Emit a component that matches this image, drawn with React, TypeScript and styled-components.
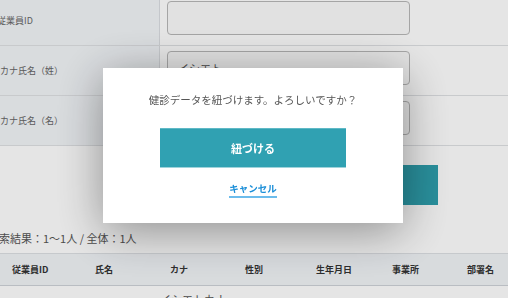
import React from 'react';
import styled, { createGlobalStyle } from 'styled-components';

const GlobalStyle = createGlobalStyle`
  body {
    margin: 0;
    overflow: hidden;
    background: #ffffff;
    font-family: 'Noto Sans CJK JP', 'Noto Sans', sans-serif;
    color: #555;
  }
`;

const formRows = [
  { label: '従業員ID', value: '', indent: 9 },
  { label: 'カナ氏名（姓）', value: 'イシエト', indent: 12 },
  { label: 'カナ氏名（名）', value: '', indent: 12 },
];

const columns = [
  { title: '従業員ID', width: 83 },
  { title: '氏名', width: 75 },
  { title: 'カナ', width: 75 },
  { title: '性別', width: 71 },
  { title: '生年月日', width: 76 },
  { title: '事業所', width: 75 },
  { title: '部署名', width: 77 },
];

const App = () => {
  return (
    <>
      <GlobalStyle />
      <Page>
        <FormTable>
          {formRows.map((row) => (
            <FormRow key={row.label}>
              <Label $indent={row.indent}>{row.label}</Label>
              <Field>
                <Input readOnly value={row.value} />
              </Field>
            </FormRow>
          ))}
        </FormTable>

        <SearchArea>
          <SearchButton>検索する</SearchButton>
        </SearchArea>

        <ResultCount>検索結果：1～1人 / 全体：1人</ResultCount>

        <Table>
          <HeaderRow>
            {columns.map((col) => (
              <HeaderCell key={col.title}>{col.title}</HeaderCell>
            ))}
          </HeaderRow>
          <DataRow>
            <DataCell />
            <DataCell />
            <DataCell>イシエトカナ</DataCell>
            <DataCell />
            <DataCell />
            <DataCell />
            <DataCell />
          </DataRow>
        </Table>
      </Page>

      <Overlay>
        <Modal>
          <Message>健診データを紐づけます。よろしいですか？</Message>
          <ConfirmButton>紐づける</ConfirmButton>
          <CancelLink>キャンセル</CancelLink>
        </Modal>
      </Overlay>
    </>
  );
};

export default App;

const Page = styled.div`
  width: 532px;
  margin-left: -12px;
`;

const FormTable = styled.div`
  margin-top: -4px;
`;

const FormRow = styled.div`
  display: grid;
  grid-template-columns: 172px 1fr;
  height: 50px;
  box-sizing: border-box;
  border-bottom: 1px solid #dfe1e4;
`;

const Label = styled.div<{ $indent: number }>`
  display: flex;
  align-items: center;
  padding-left: ${(p) => p.$indent}px;
  background: #f2f5f8;
  border-right: 1px solid #dbdee2;
  font-size: 9px;
  color: #666;
  white-space: nowrap;
`;

const Field = styled.div`
  padding: 5px 0 0 7px;
`;

const Input = styled.input`
  display: block;
  box-sizing: border-box;
  width: 243px;
  height: 34px;
  padding: 0 10px;
  border: 1px solid #b8b8b8;
  border-radius: 4px;
  background: #fbfbfb;
  font-family: inherit;
  font-size: 11px;
  color: #555;
  outline: none;
`;

const SearchArea = styled.div`
  display: flex;
  justify-content: flex-end;
  height: 79px;
  box-sizing: border-box;
  padding: 19px 82px 0 0;
`;

const SearchButton = styled.div`
  display: flex;
  align-items: center;
  justify-content: center;
  width: 240px;
  height: 40px;
  background: #2e9fad;
  color: #fff;
  font-size: 11px;
  font-weight: 700;
`;

const ResultCount = styled.div`
  font-size: 11px;
  line-height: 16px;
  color: #555;
  margin-top: 5px;
`;

const Table = styled.div`
  margin-top: 7px;
`;

const HeaderRow = styled.div`
  display: grid;
  grid-template-columns: ${columns.map((c) => `${c.width}px`).join(' ')};
  height: 33px;
  box-sizing: border-box;
  background: #f1f4f7;
  border-top: 1px solid #dde0e4;
  border-bottom: 1px solid #cfd3d8;
`;

const HeaderCell = styled.div`
  display: flex;
  align-items: center;
  padding-left: 24px;
  font-size: 9px;
  font-weight: 700;
  color: #333;
  white-space: nowrap;
`;

const DataRow = styled.div`
  display: grid;
  grid-template-columns: ${columns.map((c) => `${c.width}px`).join(' ')};
  height: 36px;
`;

const DataCell = styled.div`
  padding: 5px 0 0 14px;
  font-size: 11px;
  color: #555;
  white-space: nowrap;
`;

const Overlay = styled.div`
  position: fixed;
  inset: 0;
  background: rgba(0, 0, 0, 0.1);
  display: flex;
  align-items: flex-start;
  justify-content: center;
  padding-top: 68px;
`;

const Modal = styled.div`
  width: 300px;
  height: 155px;
  box-sizing: border-box;
  margin-left: -2px;
  padding-top: 24px;
  background: #fff;
  box-shadow: 0 8px 44px rgba(0, 0, 0, 0.38);
  display: flex;
  flex-direction: column;
  align-items: center;
`;

const Message = styled.div`
  font-size: 10.5px;
  line-height: 16px;
  color: #555;
`;

const ConfirmButton = styled.div`
  display: flex;
  align-items: center;
  justify-content: center;
  box-sizing: border-box;
  width: 186px;
  height: 40px;
  margin-top: 20px;
  background: #30a1b2;
  border-top: 1px solid #5fb9c6;
  border-bottom: 1px solid #9fd3db;
  color: #fff;
  font-size: 11px;
  font-weight: 700;
`;

const CancelLink = styled.div`
  margin-top: 14px;
  padding-bottom: 1px;
  font-size: 9.5px;
  line-height: 13px;
  font-weight: 700;
  color: #1a8ed8;
  border-bottom: 2px solid #6cbcec;
`;
